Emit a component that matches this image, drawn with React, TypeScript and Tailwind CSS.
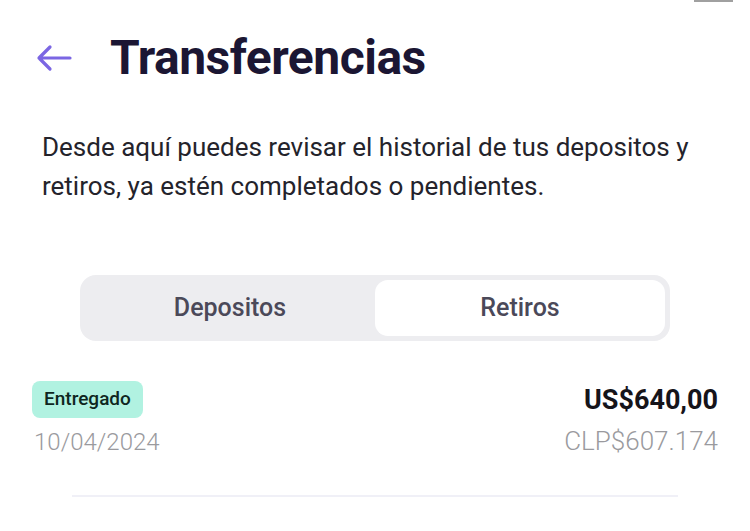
import React, { useState } from 'react';

const App = () => {
  const [tab, setTab] = useState<'depositos' | 'retiros'>('retiros');

  return (
    <div className="w-[750px] h-[531px] bg-white overflow-hidden font-['Roboto',sans-serif]">
      <div className="flex justify-end pr-[17px]">
        <div className="h-[2px] w-[39px] bg-[#a0a0a0]" />
      </div>

      {/* header */}
      <div className="flex items-center pl-[36px] pt-[29px] h-[83px]">
        <button className="w-[36px] h-[30px] flex items-center text-[#7b66e3]">
          <svg width="36" height="28" viewBox="0 0 36 28" fill="none">
            <path d="M34 14H3M14 3L3 14l11 11" stroke="currentColor" strokeWidth="3.2" strokeLinecap="round" strokeLinejoin="round" />
          </svg>
        </button>
        <h1 className="ml-[38px] text-[48px] font-bold text-[#1b1633] tracking-[-0.5px] leading-none">
          Transferencias
        </h1>
      </div>

      <p className="mt-[43px] pl-[42px] w-[710px] text-[26px] leading-[39px] text-[#24232b]">
        Desde aquí puedes revisar el historial de tus depositos y retiros, ya estén completados o pendientes.
      </p>

      {/* tabs */}
      <div className="mt-[69px] mx-[80px] w-[590px] h-[66px] bg-[#ededf0] rounded-[16px] p-[5px] flex">
        <button
          onClick={() => setTab('depositos')}
          className={`flex-1 rounded-[13px] text-[25px] font-medium text-[#4b4959] ${tab === 'depositos' ? 'bg-white' : ''}`}
        >
          Depositos
        </button>
        <button
          onClick={() => setTab('retiros')}
          className={`flex-1 rounded-[13px] text-[25px] font-medium text-[#4b4959] ${tab === 'retiros' ? 'bg-white' : ''}`}
        >
          Retiros
        </button>
      </div>

      {/* row */}
      <div className="mt-[40px] px-[32px] flex justify-between">
        <div className="flex flex-col items-start">
          <span className="bg-[#b1f2e1] rounded-[8px] px-[12px] h-[37px] flex items-center text-[19px] font-medium text-[#0e2620]">
            Entregado
          </span>
          <span className="mt-[6px] pl-[2px] text-[24px] text-[#9a9a9e] font-light">10/04/2024</span>
        </div>
        <div className="flex flex-col items-end pt-[3px]">
          <span className="text-[27px] font-bold text-[#15141a] leading-[33px]">US$640,00</span>
          <span className="mt-[5px] text-[26px] text-[#9a9a9e] font-light">CLP$607.174</span>
        </div>
      </div>

      <div className="mt-[34px] mx-[72px] h-[2px] bg-[#f0f0f7]" />
    </div>
  );
};

export default App;
